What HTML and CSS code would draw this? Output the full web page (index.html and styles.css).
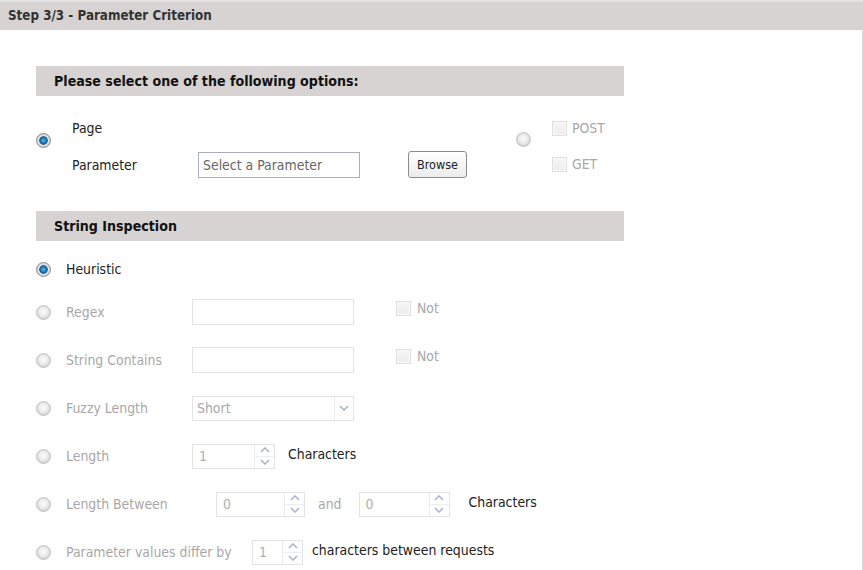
FILE: index.html
```
<!DOCTYPE html>
<html>
<head>
<meta charset="utf-8">
<link rel="stylesheet" href="styles.css">
</head>
<body>
<div class="title">Step 3/3 - Parameter Criterion</div>
<div class="content">
  <div class="section-head">Please select one of the following options:</div>
  <div class="options">
    <div class="radio-col"><span class="radio on"></span></div>
    <div class="opt-main">
      <div class="opt-row page-row">Page</div>
      <div class="opt-row">
        <span class="opt-label">Parameter</span>
        <span class="text-input param-input">Select a Parameter</span>
        <span class="button">Browse</span>
      </div>
    </div>
    <div class="radio-col right-radio"><span class="radio"></span></div>
    <div class="checks">
      <div class="check-row"><span class="checkbox"></span><span class="dis">POST</span></div>
      <div class="check-row"><span class="checkbox"></span><span class="dis">GET</span></div>
    </div>
  </div>

  <div class="section-head second">String Inspection</div>
  <div class="rows">
    <div class="row first"><span class="radio on"></span><span class="label en">Heuristic</span></div>
    <div class="row gap-first"><span class="radio"></span><span class="label">Regex</span><span class="text-input dis-input"></span><span class="not"><span class="checkbox"></span><span class="dis">Not</span></span></div>
    <div class="row"><span class="radio"></span><span class="label">String Contains</span><span class="text-input dis-input"></span><span class="not"><span class="checkbox"></span><span class="dis">Not</span></span></div>
    <div class="row"><span class="radio"></span><span class="label">Fuzzy Length</span><span class="select"><span class="select-val">Short</span><span class="select-btn"><svg width="10" height="6" viewBox="0 0 10 6"><path d="M1 1l4 4 4-4" fill="none" stroke="#a8b4c0" stroke-width="1.6"/></svg></span></span></div>
    <div class="row"><span class="radio"></span><span class="label">Length</span><span class="spinner w83"><span class="spin-val">1</span><span class="spin-btns"><span class="spin-up"><svg width="10" height="6" viewBox="0 0 10 6"><path d="M1 5l4-4 4 4" fill="none" stroke="#a8b8cc" stroke-width="1.6"/></svg></span><span class="spin-down"><svg width="10" height="6" viewBox="0 0 10 6"><path d="M1 1l4 4 4-4" fill="none" stroke="#a8b8cc" stroke-width="1.6"/></svg></span></span></span><span class="en after13">Characters</span></div>
    <div class="row"><span class="radio"></span><span class="label wide">Length Between</span><span class="spinner w89"><span class="spin-val">0</span><span class="spin-btns"><span class="spin-up"><svg width="10" height="6" viewBox="0 0 10 6"><path d="M1 5l4-4 4 4" fill="none" stroke="#a8b8cc" stroke-width="1.6"/></svg></span><span class="spin-down"><svg width="10" height="6" viewBox="0 0 10 6"><path d="M1 1l4 4 4-4" fill="none" stroke="#a8b8cc" stroke-width="1.6"/></svg></span></span></span><span class="dis and">and</span><span class="spinner w91"><span class="spin-val">0</span><span class="spin-btns"><span class="spin-up"><svg width="10" height="6" viewBox="0 0 10 6"><path d="M1 5l4-4 4 4" fill="none" stroke="#a8b8cc" stroke-width="1.6"/></svg></span><span class="spin-down"><svg width="10" height="6" viewBox="0 0 10 6"><path d="M1 1l4 4 4-4" fill="none" stroke="#a8b8cc" stroke-width="1.6"/></svg></span></span></span><span class="en after19">Characters</span></div>
    <div class="row"><span class="radio"></span><span class="label widest">Parameter values differ by</span><span class="spinner w51"><span class="spin-val">1</span><span class="spin-btns"><span class="spin-up"><svg width="10" height="6" viewBox="0 0 10 6"><path d="M1 5l4-4 4 4" fill="none" stroke="#a8b8cc" stroke-width="1.6"/></svg></span><span class="spin-down"><svg width="10" height="6" viewBox="0 0 10 6"><path d="M1 1l4 4 4-4" fill="none" stroke="#a8b8cc" stroke-width="1.6"/></svg></span></span></span><span class="en after9">characters between requests</span></div>
  </div>
</div>
</body>
</html>
```
FILE: styles.css
```
html, body {
  margin: 0;
  padding: 0;
  background: #ffffff;
}
body {
  font-family: "DejaVu Sans Condensed", "DejaVu Sans", sans-serif;
  font-size: 13.9px;
  color: #222;
  width: 863px;
  height: 570px;
  overflow: hidden;
}
.title {
  height: 28px;
  line-height: 27px;
  border-top: 2px solid #e4e2e1;
  background: #d6d3d2;
  padding-left: 8px;
  font-weight: bold;
  font-size: 13.3px;
  color: #333;
}
.content {
  border-right: 1px solid #dcdcdc;
  height: 540px;
  padding-left: 36px;
  padding-top: 36px;
  box-sizing: border-box;
}
.section-head {
  width: 570px;
  height: 30px;
  line-height: 31px;
  background: #d6d3d2;
  padding-left: 18px;
  font-weight: bold;
  font-size: 14.1px;
  color: #111;
}
.section-head.second {
  margin-top: 33px;
}
.options {
  display: flex;
  margin-top: 22px;
}
.radio-col {
  width: 36px;
  padding-top: 15px;
}
.right-radio {
  width: 36px;
  margin-left: 49px;
  padding-top: 14px;
}
.opt-main {
  display: flex;
  flex-direction: column;
}
.opt-row {
  display: flex;
  align-items: center;
}
.page-row {
  height: 20px;
  margin-bottom: 13px;
}
.opt-label {
  width: 126px;
}
.text-input {
  box-sizing: border-box;
  display: inline-block;
  width: 162px;
  height: 26px;
  border: 1px solid #a7aec4;
  line-height: 24px;
  padding-left: 4px;
  color: #666;
  background: #fff;
}
.button {
  box-sizing: border-box;
  margin-left: 48px;
  width: 59px;
  height: 27px;
  border: 1px solid #8c8c8c;
  border-radius: 3px;
  background: linear-gradient(#ffffff, #ececec);
  font-size: 12.5px;
  text-align: center;
  line-height: 25px;
  color: #222;
}
.checks {
  display: flex;
  flex-direction: column;
  padding-top: 1px;
}
.check-row {
  display: flex;
  align-items: center;
  height: 18px;
}
.check-row + .check-row {
  margin-top: 18px;
}
.checkbox {
  box-sizing: border-box;
  display: inline-block;
  width: 15px;
  height: 15px;
  border: 1px solid #dedede;
  background: linear-gradient(#f6f6f6, #ececec);
  margin-right: 5px;
  box-shadow: inset 0 0 0 1px #fafafa;
}
.dis {
  color: #a8a8a8;
}
.en {
  color: #222;
}
.radio {
  box-sizing: border-box;
  display: inline-block;
  width: 15px;
  height: 15px;
  border-radius: 50%;
  border: 1px solid #c4c4c4;
  background: radial-gradient(circle at 50% 45%, #fcfcfc 0, #e8e8e8 50%, #d0d0d0 70%, #e8e8e8 100%);
  flex: none;
}
.radio.on {
  border: 1px solid #8f8f8f;
  background: radial-gradient(circle at 50% 50%, #5ab4ec 0, #1a78bc 30%, #0c4f86 42%, #e6e6e6 50%, #c6c6c6 78%, #dcdcdc 100%);
}
.rows {
  display: flex;
  flex-direction: column;
}
.row {
  display: flex;
  align-items: center;
  height: 26px;
  margin-top: 22px;
}
.row.first {
  margin-top: 15px;
}
.row.gap-first {
  margin-top: 17px;
}
.label {
  width: 126px;
  margin-left: 15px;
  color: #a8a8a8;
}
.label.en {
  color: #222;
}
.label.wide {
  width: 150px;
}
.label.widest {
  width: 186px;
}
.dis-input {
  border-color: #e4e4e4;
}
.not {
  display: flex;
  align-items: center;
  margin-left: 42px;
  margin-top: -8px;
}
.not .checkbox {
  margin-right: 6px;
}
.select {
  box-sizing: border-box;
  display: flex;
  width: 162px;
  height: 25px;
  border: 1px solid #e4e4e4;
}
.select-val {
  flex: 1;
  color: #a8a8a8;
  padding-left: 4px;
  line-height: 22px;
}
.select-btn {
  width: 18px;
  border-left: 1px solid #ececec;
  display: flex;
  align-items: center;
  justify-content: center;
}
.spinner {
  box-sizing: border-box;
  display: flex;
  height: 25px;
  border: 1px solid #e4e4e4;
}
.w83 { width: 83px; }
.w89 { width: 89px; }
.w91 { width: 91px; }
.w51 { width: 51px; }
.spin-val {
  flex: 1;
  color: #b0b0b0;
  padding-left: 6px;
  line-height: 23px;
}
.spin-btns {
  width: 19px;
  border-left: 1px solid #ececec;
  display: flex;
  flex-direction: column;
}
.spin-up, .spin-down {
  flex: 1;
  display: flex;
  align-items: center;
  justify-content: center;
}
.spin-up {
  border-bottom: 1px solid #eeeeee;
}
.after13 { margin-left: 13px; margin-top: -4px; }
.after19 { margin-left: 19px; margin-top: -4px; }
.after9 { margin-left: 9px; margin-top: -4px; }
.and { margin-left: 13px; margin-right: 17px; }
```
